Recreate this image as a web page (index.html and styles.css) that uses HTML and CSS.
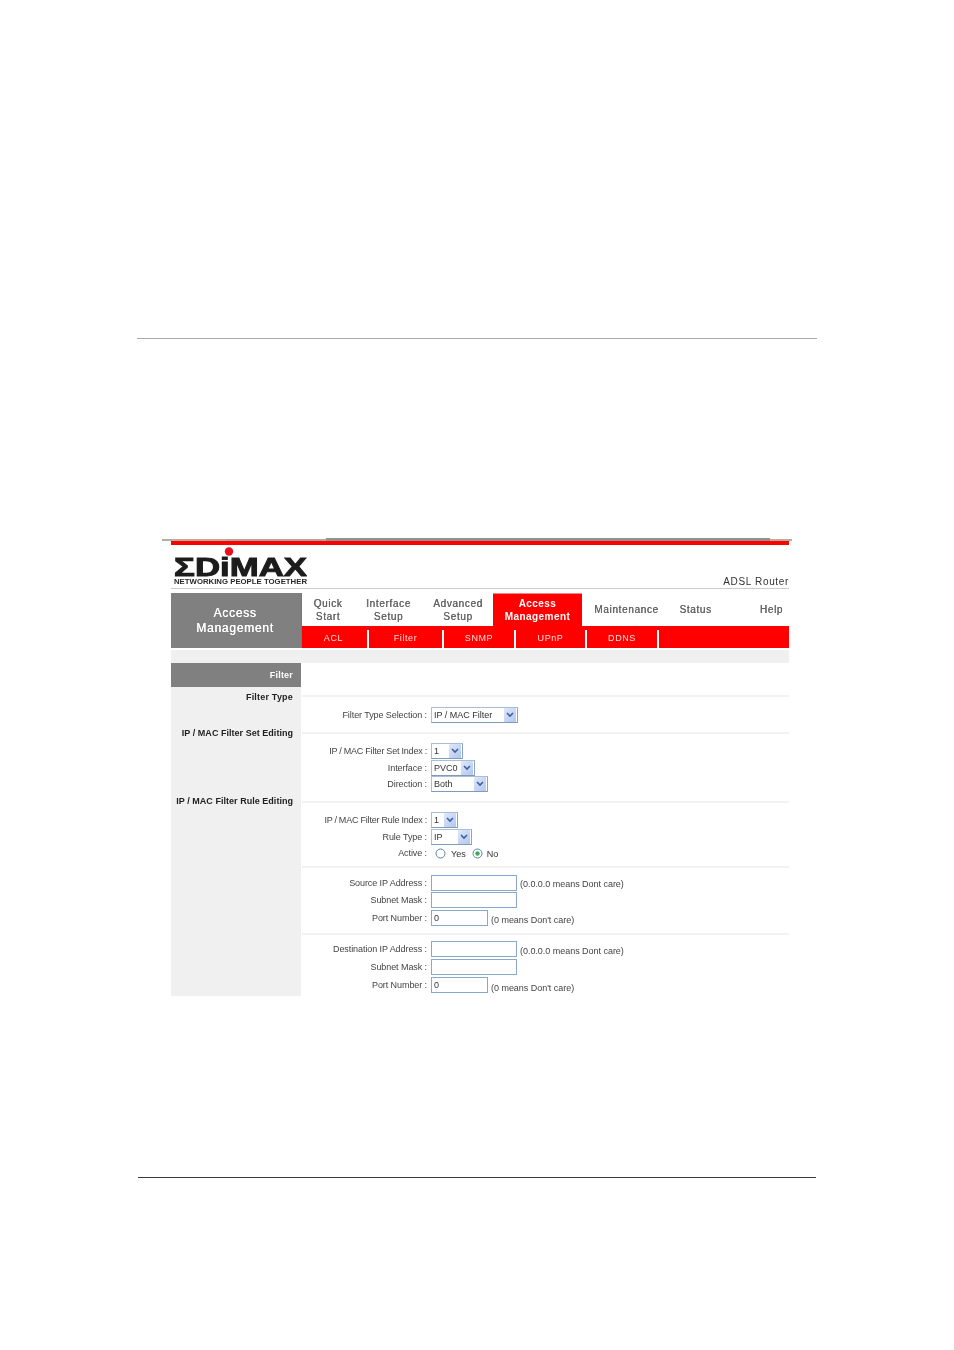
FILE: index.html
```html
<!DOCTYPE html>
<html lang="en">
<head>
<meta charset="utf-8">
<title>ADSL Router - Access Management</title>
<link rel="stylesheet" href="styles.css">
</head>
<body>
<div class="page-rule top-rule"></div>
<div class="shot-edge">
  <span class="edge-a"></span><span class="edge-b"></span><span class="edge-c"></span><span class="edge-d"></span>
</div>
<main class="router">
  <div class="red-top"></div>
  <header class="brand">
    <svg class="logo" width="136" height="43" viewBox="0 0 136 43" role="img" aria-label="Edimax">
      <circle cx="58" cy="6.5" r="4.2" fill="#e8101c"/>
      <text class="logo-word" x="3" y="31" textLength="133" lengthAdjust="spacingAndGlyphs">ΣDiMAX</text>
      <text class="logo-tag" x="3" y="38.5" textLength="133" lengthAdjust="spacingAndGlyphs">NETWORKING PEOPLE TOGETHER</text>
    </svg>
    <div class="product">ADSL Router</div>
  </header>
  <div class="top-area">
    <div class="section-title">Access<br>Management</div>
    <div class="nav-col">
      <nav class="nav">
        <a class="n1">Quick<br>Start</a>
        <a class="n2">Interface<br>Setup</a>
        <a class="n3">Advanced<br>Setup</a>
        <a class="n4 active">Access<br>Management</a>
        <a class="n5">Maintenance</a>
        <a class="n6">Status</a>
        <a class="n7">Help</a>
      </nav>
      <div class="subnav">
        <a class="s1">ACL</a><a class="s2">Filter</a><a class="s3">SNMP</a><a class="s4">UPnP</a><a class="s5">DDNS</a>
      </div>
    </div>
  </div>
  <div class="strip"></div>
  <div class="content">
    <aside class="side">
      <div class="side-head">Filter</div>
      <div class="side-l l1">Filter Type</div>
      <div class="side-l l2">IP / MAC Filter Set Editing</div>
      <div class="side-l l3">IP / MAC Filter Rule Editing</div>
    </aside>
    <section class="main">
      <div class="row r0"></div>
      <div class="row r1">
        <div class="field"><label>Filter Type Selection :</label><span class="sel w87">IP / MAC Filter<i class="arr"><svg width="8" height="6" viewBox="0 0 8 6"><path d="M1 1l3 3 3-3" fill="none" stroke="#3d5f9c" stroke-width="1.6"/></svg></i></span></div>
      </div>
      <div class="row r2">
        <div class="field"><label class="tight">IP / MAC Filter Set Index :</label><span class="sel w32">1<i class="arr"><svg width="8" height="6" viewBox="0 0 8 6"><path d="M1 1l3 3 3-3" fill="none" stroke="#3d5f9c" stroke-width="1.6"/></svg></i></span></div>
        <div class="field"><label>Interface :</label><span class="sel w44">PVC0<i class="arr"><svg width="8" height="6" viewBox="0 0 8 6"><path d="M1 1l3 3 3-3" fill="none" stroke="#3d5f9c" stroke-width="1.6"/></svg></i></span></div>
        <div class="field"><label>Direction :</label><span class="sel w57">Both<i class="arr"><svg width="8" height="6" viewBox="0 0 8 6"><path d="M1 1l3 3 3-3" fill="none" stroke="#3d5f9c" stroke-width="1.6"/></svg></i></span></div>
      </div>
      <div class="row r3">
        <div class="field"><label class="tight">IP / MAC Filter Rule Index :</label><span class="sel w27">1<i class="arr"><svg width="8" height="6" viewBox="0 0 8 6"><path d="M1 1l3 3 3-3" fill="none" stroke="#3d5f9c" stroke-width="1.6"/></svg></i></span></div>
        <div class="field"><label>Rule Type :</label><span class="sel w41">IP<i class="arr"><svg width="8" height="6" viewBox="0 0 8 6"><path d="M1 1l3 3 3-3" fill="none" stroke="#3d5f9c" stroke-width="1.6"/></svg></i></span></div>
        <div class="field"><label>Active :</label>
          <span class="radios">
            <svg width="11" height="11" viewBox="0 0 11 11"><circle cx="5.5" cy="5.5" r="4.5" fill="#fff" stroke="#5d7fa0"/></svg><span class="r-yes">Yes</span>
            <svg width="11" height="11" viewBox="0 0 11 11"><circle cx="5.5" cy="5.5" r="4.5" fill="#fff" stroke="#5d7fa0"/><circle cx="5.5" cy="5.5" r="2.2" fill="#3fa860"/></svg><span class="r-no">No</span>
          </span>
        </div>
      </div>
      <div class="row r4">
        <div class="field f-long"><label>Source IP Address :</label><input class="inp long" type="text"><span class="hint">(0.0.0.0 means Dont care)</span></div>
        <div class="field f-long"><label>Subnet Mask :</label><input class="inp long" type="text"></div>
        <div class="field f-long"><label>Port Number :</label><input class="inp short" type="text" value="0"><span class="hint hint-low">(0 means Don't care)</span></div>
      </div>
      <div class="row r5">
        <div class="field f-wide"><label>Destination IP Address :</label><input class="inp long" type="text"><span class="hint">(0.0.0.0 means Dont care)</span></div>
        <div class="field f-wide"><label>Subnet Mask :</label><input class="inp long" type="text"></div>
        <div class="field f-wide"><label>Port Number :</label><input class="inp short" type="text" value="0"><span class="hint hint-low">(0 means Don't care)</span></div>
      </div>
    </section>
  </div>
</main>
<div class="page-rule bottom-rule"></div>
</body>
</html>
```
FILE: styles.css
```css
* { box-sizing: border-box; }
html, body { margin: 0; padding: 0; background: #fff; }
body { width: 954px; height: 1350px; overflow: hidden; font-family: "Liberation Sans", Arial, sans-serif; font-size: 9px; color: #333; }

.page-rule { height: 1px; }
.top-rule { margin: 338px 0 0 137px; width: 680px; background: #a9a9a9; }
.bottom-rule { margin: 181px 0 0 138px; width: 678px; background: #3a3a3a; }

.shot-edge { margin: 199px 0 0 162px; width: 630px; height: 3px; display: flex; align-items: flex-end; }
.shot-edge span { display: block; }
.edge-a { width: 64px; height: 2px; background: #b5ae9c; }
.edge-b { width: 100px; height: 2px; background: #a9a79c; }
.edge-c { width: 444px; height: 3px; background: #8d938d; }
.edge-d { width: 22px; height: 2px; background: #b5ae9c; }

.router { margin-left: 171px; width: 618px; filter: blur(.3px); }
.red-top { height: 4px; background: #f00; }

.brand { height: 44px; border-bottom: 1px solid #ccc; display: flex; justify-content: space-between; }
.logo { display: block; }
.logo-word { font-family: "Liberation Sans", Arial, sans-serif; font-size: 25px; font-weight: 700; fill: #1c1c1c; stroke: #1c1c1c; stroke-width: .9px; }
.logo-tag { font-family: "Liberation Sans", Arial, sans-serif; font-size: 7px; font-weight: 700; fill: #2a2a2a; }
.product { align-self: flex-end; font-size: 10px; letter-spacing: .65px; color: #333; line-height: 13px; }

.top-area { margin-top: 4px; display: flex; height: 55px; }
.section-title { width: 131px; background: #808080; border-right: 1px solid #777; color: #fff; font-size: 12px; font-weight: 400; line-height: 15px; text-align: center; padding: 13px 2px 0 0; letter-spacing: .75px; text-shadow: .3px 0 0 #fff; }
.nav-col { flex: 1; display: flex; flex-direction: column; }
.nav { height: 33px; display: flex; }
.nav a { font-size: 10px; line-height: 13px; letter-spacing: .65px; color: #666; text-align: center; display: flex; align-items: center; justify-content: center; text-shadow: .3px 0 0 #666; }
.n1 { width: 52px; }
.n2 { width: 69px; }
.n3 { width: 70px; }
.n4 { width: 89px; }
.n5 { width: 89px; }
.n6 { width: 49px; }
.n7 { flex: 1; justify-content: flex-end !important; padding-right: 6px; }
.nav a.active { background: #f00; color: #fff; font-weight: 700; letter-spacing: .45px; border-top: 1px solid #e88; text-shadow: none; }
.subnav { height: 22px; background: #f00; display: flex; padding-top: 4px; }
.subnav a { color: #fbdcdc; font-size: 9px; letter-spacing: .6px; line-height: 17px; text-align: center; border-right: 2px solid #fff; }
.s1 { width: 67px; padding-right: 2px; }
.s2 { width: 75px; }
.s3 { width: 72px; }
.s4 { width: 71px; }
.s5 { width: 72px; }

.strip { margin-top: 2px; height: 13px; background: #f0f0f0; }

.content { display: flex; height: 333px; }
.side { width: 130px; background: #f0f0f0; font-weight: 700; color: #222; text-align: right; padding-right: 8px; letter-spacing: .03px; }
.side-head { margin: 0 -8px 0 0; height: 24px; background: #808080; color: #fff; line-height: 24px; padding-right: 8px; letter-spacing: .2px; }
.side-l { line-height: 12px; white-space: nowrap; }
.l1 { margin-top: 4px; letter-spacing: .2px; }
.l2 { margin-top: 24px; }
.l3 { margin-top: 56px; }

.main { flex: 1; padding-left: 1px; }
.row { border-bottom: 2px solid #f2f2f2; display: flex; flex-direction: column; }
.r0 { height: 34px; }
.r1 { height: 37px; padding-top: 10px; }
.r2 { height: 69px; padding-top: 9px; }
.r3 { height: 65px; padding-top: 9px; }
.r4 { height: 67px; padding-top: 6px; }
.r5 { height: 60px; padding-top: 5px; border-bottom: 0; }

.field { height: 16.5px; display: flex; align-items: center; white-space: nowrap; }
.f-long { height: 17.5px; }
.f-wide { height: 18px; }
.field label { width: 125px; text-align: right; margin-right: 4px; color: #444; letter-spacing: -.08px; }
.field label.tight { letter-spacing: -.16px; word-spacing: -.3px; }
.sel { height: 16px; background: #fff; border: 1px solid; border-color: #a9bfd6 #8aa5c0 #7f9bb8 #a9bfd6; display: flex; justify-content: space-between; align-items: center; padding: 0 1px 0 2px; color: #333; }
.arr { width: 12px; height: 14px; background: linear-gradient(135deg, #dfe8fb, #b3c6f0); display: flex; align-items: center; justify-content: center; }
.w87 { width: 87px; }
.w32 { width: 32px; }
.w44 { width: 44px; }
.w57 { width: 57px; }
.w27 { width: 27px; }
.w41 { width: 41px; }

.radios { display: flex; align-items: center; padding-left: 4px; }
.r-yes { margin: 1px 6px 0 5px; }
.r-no { margin: 1px 0 0 4px; }

.inp { height: 16px; padding: 0 2px; border: 1px solid #8aa8c8; background: #fff; font: 9px "Liberation Sans", Arial, sans-serif; color: #333; outline: none; }
.long { width: 86px; }
.short { width: 57px; }
.hint { margin: 3px 0 0 3px; color: #444; letter-spacing: -.03px; }
.hint-low { margin-top: 5px; }
```
